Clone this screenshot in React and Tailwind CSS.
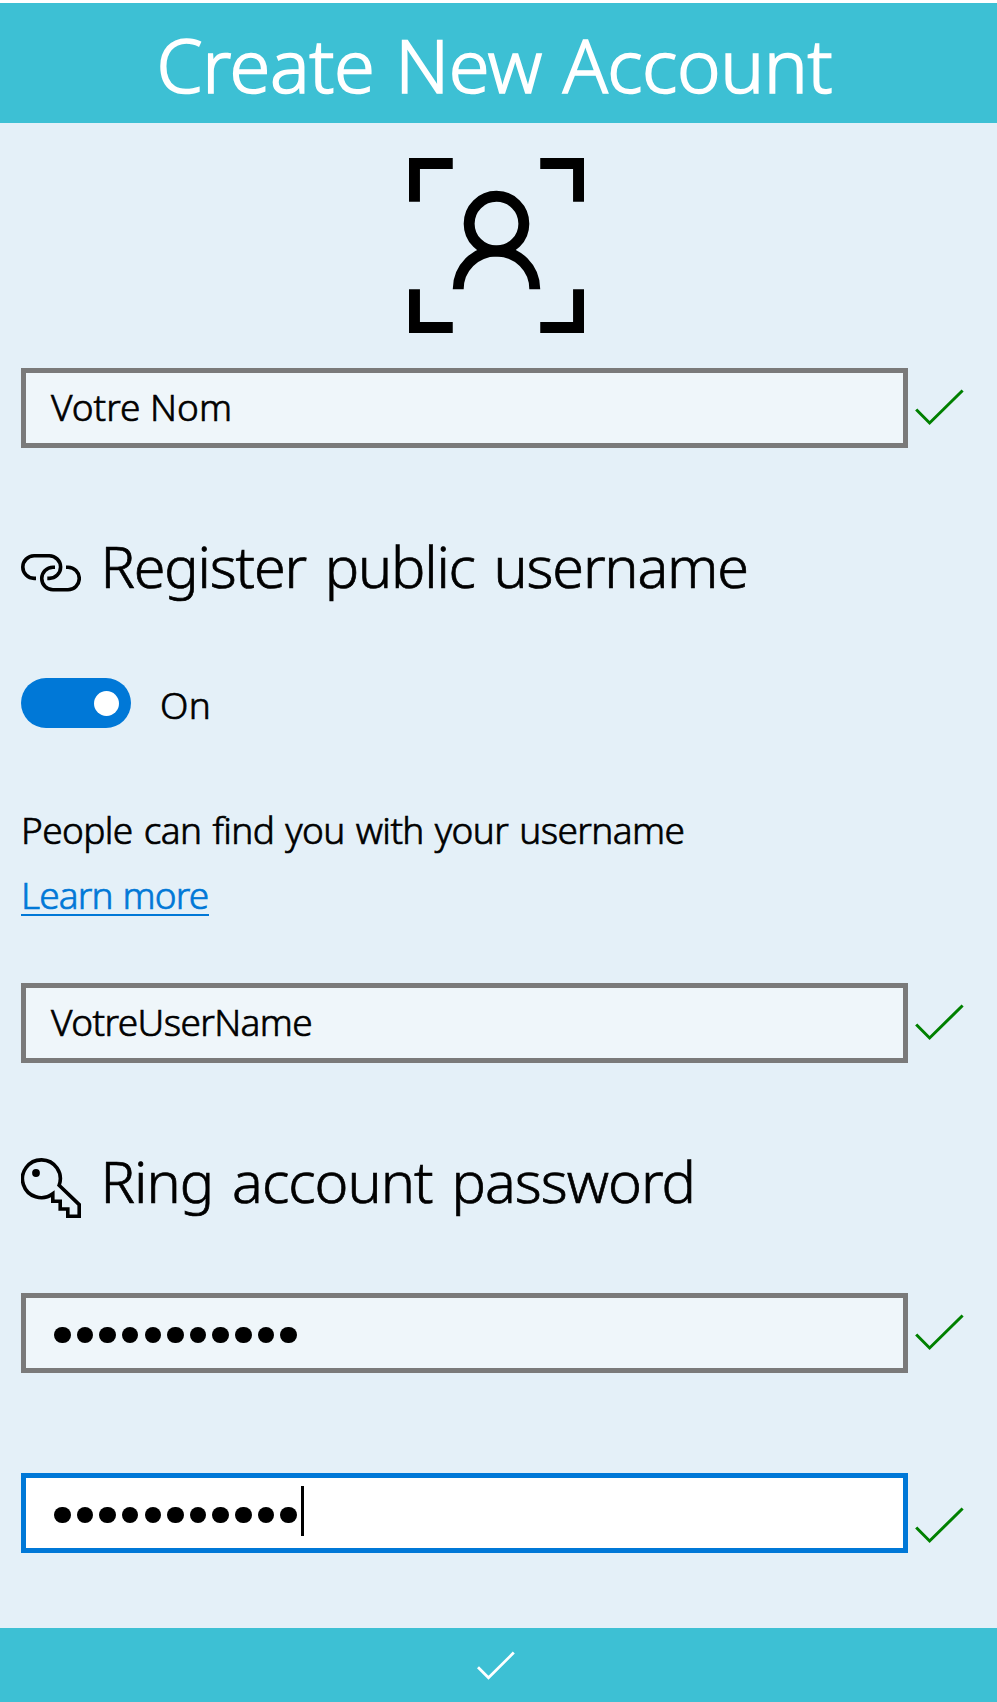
const BODY_TEXT =
  "text-[37px] leading-[40px] whitespace-pre [-webkit-text-stroke:0.7px_currentColor]";

function PortraitIcon() {
  return (
    <svg viewBox="0 0 16 16" className="mt-[35px] ml-[409px] block h-[175px] w-[175px]" fill="none" stroke="#000" strokeWidth="1">
      <path d="M4 .5H.5V4M12 .5h3.5V4M.5 12v3.5H4M15.5 12v3.5H12" />
      <circle cx="8" cy="6" r="2.5" />
      <path d="M4.5 12a3.5 3.5 0 0 1 7 0" />
    </svg>
  );
}

function LinkIcon() {
  return (
    <svg viewBox="0 0 60 60" className="mt-[18px] h-[60px] w-[60px] shrink-0" fill="none" stroke="#000" strokeWidth="3.6">
      <path d="M15 35.4h-1.9a11.3 11.3 0 0 1 0-22.6h15.2a11.3 11.3 0 0 1 0 22.6h-2" />
      <path d="M45 24.2h2a11.2 11.2 0 0 1 0 22.5H32a11.2 11.2 0 0 1 0-22.5h2" />
    </svg>
  );
}

function KeyIcon() {
  return (
    <svg viewBox="0 0 60 60" className="mt-[18px] h-[60px] w-[60px] shrink-0" fill="none" stroke="#000" strokeWidth="3.6">
      <path d="M38.1 27.3 58.2 46.6V58.2H46.8V51H39.2V43.3H31.8V35.8A18.9 18.9 0 1 1 38.1 27.3Z" />
      <circle cx="15" cy="15" r="3.9" fill="#000" stroke="none" />
    </svg>
  );
}

function Field({ children, focused = false, checkClass = "" }) {
  return (
    <div className="flex h-20">
      <div
        className={
          focused
            ? "flex w-[887px] items-center border-[5px] border-[#0078d7] bg-white pl-[25px]"
            : "flex w-[887px] items-center border-[5px] border-[#7a7a7a] bg-[#eff6fa] pl-[25px]"
        }
      >
        {children}
      </div>
      <svg viewBox="0 0 50 80" className={`ml-[7px] h-20 w-[50px] ${checkClass}`} fill="none" stroke="#008000" strokeWidth="3">
        <path d="M1.2 41.5 14.6 55 47.6 22.5" />
      </svg>
    </div>
  );
}

function Dots() {
  return (
    <div className="flex gap-[6.15px] pl-[3px]" role="img" aria-label="Password">
      {Array.from({ length: 11 }, (_, i) => (
        <span key={i} className="h-[16.5px] w-[16.5px] rounded-full bg-black" />
      ))}
    </div>
  );
}

export default function App() {
  return (
    <div className="flex h-[1702px] w-[997px] flex-col overflow-hidden bg-[#e4f0f8] font-['Noto_Sans','Open_Sans',sans-serif] font-light text-black">
      <header className="h-[123px] border-t-[3px] border-white bg-[#3dc0d4] pl-[156.5px]">
        <h1 className="pt-[2px] text-[74px] leading-[120px] tracking-[-0.4px] [word-spacing:2px] whitespace-pre text-white [-webkit-text-stroke:1.6px_currentColor]">
          Create New Account
        </h1>
      </header>

      <main className="flex flex-1 flex-col">
        <PortraitIcon />
        <div className="mt-[35px] pl-[21px]">
          <Field>
            <span className={`${BODY_TEXT} pb-[3px]`}>Votre Nom</span>
          </Field>

          <div className="mt-[77px] flex h-20">
            <LinkIcon />
            <h2 className="ml-[19.5px] pt-[1px] text-[57.5px] leading-[80px] tracking-[-1.2px] [word-spacing:5px] whitespace-pre [-webkit-text-stroke:0.7px_currentColor]">
              Register public username
            </h2>
          </div>

          <div className="mt-[73px] flex h-[50px]">
            <div className="flex w-[110px] items-center justify-end rounded-full bg-[#0078d7] pr-3">
              <span className="h-[25px] w-[25px] rounded-full bg-white" />
            </div>
            <span className={`${BODY_TEXT} mt-[7px] ml-[29px] tracking-[0.3px]`}>On</span>
          </div>

          <p className={`${BODY_TEXT} mt-[82px] tracking-[-0.6px] [word-spacing:2px]`}>
            People can find you with your username
          </p>
          <a className="mt-[25px] block h-[41px] w-[188px] border-b-2 border-[#0078d7] text-[#0078d7]">
            <span className={`${BODY_TEXT} block tracking-[-0.84px] [word-spacing:1px]`}>Learn more</span>
          </a>

          <div className="mt-[67px]">
            <Field>
              <span className={`${BODY_TEXT} pb-[3px] tracking-[-0.59px]`}>VotreUserName</span>
            </Field>
          </div>

          <div className="mt-[77px] flex h-20">
            <KeyIcon />
            <h2 className="ml-[19.5px] pt-[1px] text-[57.5px] leading-[80px] tracking-[-1px] [word-spacing:5px] whitespace-pre [-webkit-text-stroke:0.7px_currentColor]">
              Ring account password
            </h2>
          </div>

          <div className="mt-[73px]">
            <Field>
              <div className="pt-[4px]">
                <Dots />
              </div>
            </Field>
          </div>
          <div className="mt-[100px]">
            <Field focused checkClass="translate-y-[13px]">
              <div className="pt-[4px]">
                <Dots />
              </div>
              <span className="mb-[4px] ml-[4px] h-[50px] w-[3px] bg-black" />
            </Field>
          </div>
        </div>
      </main>

      <footer className="flex h-[74px] items-center bg-[#3dc0d4]">
        <svg viewBox="0 0 40 40" className="ml-[476px] h-10 w-10" fill="none" stroke="#fff" strokeWidth="2.8">
          <path d="M2 22.3 12.5 32.8 37.8 7.6" />
        </svg>
      </footer>
    </div>
  );
}
